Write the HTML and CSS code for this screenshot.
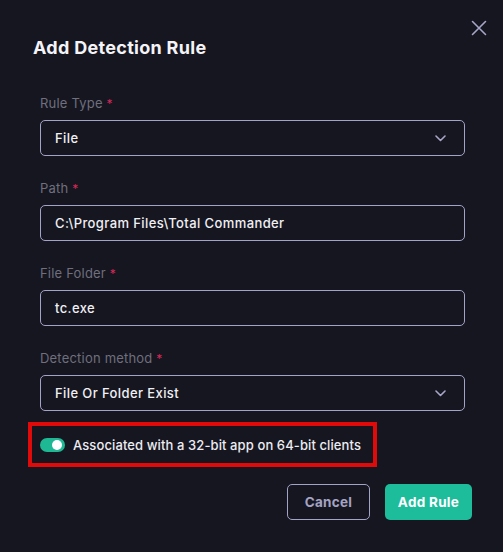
FILE: index.html
```html
<!DOCTYPE html>
<html>
<head>
<meta charset="utf-8">
<link rel="stylesheet" href="styles.css">
</head>
<body>
<div class="modal">
  <button class="close" aria-label="Close">
    <svg width="16" height="16" viewBox="0 0 16 16"><path d="M1.5 1.5 L14.5 14.5 M14.5 1.5 L1.5 14.5" stroke="#a7a6c9" stroke-width="1.6" stroke-linecap="round"/></svg>
  </button>
  <h2 class="title">Add Detection Rule</h2>
  <div class="fields">
    <div class="field">
      <label class="label">Rule Type <span class="req">*</span></label>
      <div class="box select"><span>File</span>
        <svg class="chev" width="11" height="7" viewBox="0 0 11 7"><path d="M1 1 L5.5 5.5 L10 1" fill="none" stroke="#a7a6c9" stroke-width="1.6" stroke-linecap="round" stroke-linejoin="round"/></svg>
      </div>
    </div>
    <div class="field">
      <label class="label">Path <span class="req">*</span></label>
      <div class="box"><span>C:\Program Files\Total Commander</span></div>
    </div>
    <div class="field">
      <label class="label">File Folder <span class="req">*</span></label>
      <div class="box"><span>tc.exe</span></div>
    </div>
    <div class="field">
      <label class="label">Detection method <span class="req">*</span></label>
      <div class="box select"><span>File Or Folder Exist</span>
        <svg class="chev" width="11" height="7" viewBox="0 0 11 7"><path d="M1 1 L5.5 5.5 L10 1" fill="none" stroke="#a7a6c9" stroke-width="1.6" stroke-linecap="round" stroke-linejoin="round"/></svg>
      </div>
    </div>
  </div>
  <div class="toggle-row">
    <span class="toggle"><span class="knob"></span></span>
    <span class="toggle-text">Associated with a 32-bit app on 64-bit clients</span>
  </div>
  <div class="actions">
    <button class="btn cancel">Cancel</button>
    <button class="btn primary">Add Rule</button>
  </div>
</div>
</body>
</html>
```
FILE: styles.css
```css
* { box-sizing: border-box; }
html, body { margin: 0; padding: 0; }
body {
  background: #161620;
  font-family: "Inter", "Noto Sans", sans-serif;
  color: #ececf2;
  width: 503px;
  height: 552px;
  overflow: hidden;
}
.modal {
  position: relative;
  padding: 36px 38px 0 33px;
  display: flex;
  flex-direction: column;
}
.close {
  position: absolute;
  top: 20px;
  right: 16px;
  background: none;
  border: 0;
  padding: 0;
  width: 16px;
  height: 16px;
  display: flex;
}
.title {
  margin: 0;
  font-size: 18px;
  line-height: 24px;
  font-weight: 700;
  color: #f4f4f8;
  letter-spacing: 0.3px;
}
.fields {
  margin-top: 35px;
  padding-left: 7px;
  display: flex;
  flex-direction: column;
  gap: 24px;
}
.field {
  display: flex;
  flex-direction: column;
  gap: 9px;
}
.label {
  display: block;
  height: 16px;
  font-size: 13px;
  line-height: 16px;
  color: #6f6f7d;
  font-weight: 400;
  letter-spacing: 0.2px;
}
.req { color: #d8285a; font-size: 12px; line-height: 1; }
.box {
  height: 36px;
  border: 1px solid #a3a2c8;
  border-radius: 5px;
  display: flex;
  align-items: center;
  justify-content: space-between;
  padding: 0 18px 0 14px;
  font-size: 13px;
  font-weight: 500;
  color: #f0f0f5;
  letter-spacing: 0.4px;
}
.chev { display: block; }
.toggle-row {
  margin-top: 11px;
  margin-left: -5px;
  width: 349px;
  height: 45px;
  border: 4px solid #e00a0a;
  display: flex;
  align-items: center;
  gap: 8px;
  padding-left: 8px;
}
.toggle {
  width: 25px;
  height: 14px;
  border-radius: 7px;
  background: #1fb894;
  display: flex;
  align-items: center;
  justify-content: flex-end;
  padding-right: 3px;
}
.knob {
  width: 10px;
  height: 10px;
  border-radius: 50%;
  background: #fff;
}
.toggle-text {
  font-size: 13px;
  font-weight: 500;
  color: #ececf2;
  letter-spacing: 0.1px;
}
.actions {
  margin-top: 17px;
  margin-right: -7px;
  display: flex;
  justify-content: flex-end;
  gap: 15px;
}
.btn {
  height: 36px;
  border-radius: 5px;
  font-family: inherit;
  font-size: 13.5px;
  font-weight: 700;
  letter-spacing: 0.3px;
}
.cancel {
  width: 83px;
  background: transparent;
  border: 1px solid #a3a2c8;
  color: #a5a3c4;
}
.primary {
  width: 87px;
  background: #1dbc9b;
  border: 0;
  color: #fff;
}
```
